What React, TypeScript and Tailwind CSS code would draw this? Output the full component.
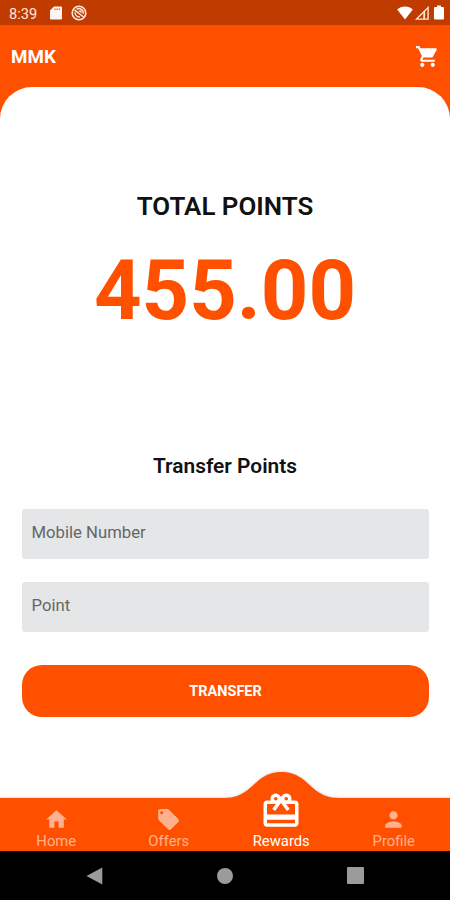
import React from "react";
import { MdHome, MdLocalOffer, MdPerson, MdRedeem, MdShoppingCart } from "react-icons/md";

function StatusBar() {
  return (
    <div className="flex h-[25px] shrink-0 items-center justify-between bg-[#bf3b00] pr-[6px] pl-[9px] text-white">
      <div className="flex items-center pt-[1px]">
        <span className="w-[41px] pt-[1px] text-[14.6px] leading-[24px] text-[#ffe9df]">8:39</span>
        <svg className="h-[14px] w-[12px]" viewBox="0 0 12 14" fill="#fff4ef">
          <path fillRule="evenodd" d="M4 0.5H11a1 1 0 0 1 1 1v11a1 1 0 0 1-1 1H1a1 1 0 0 1-1-1V4.5zM4.4 2.4v1.6h1V2.4zM6.6 2.4v1.6h1V2.4zM8.8 2.4v1.6h1V2.4z" />
        </svg>
        <svg className="ml-[9px] size-[16px]" viewBox="0 0 16 16" fill="none" stroke="#ffe9df">
          <circle cx="8" cy="8" r="6.8" strokeWidth="1.6" />
          <path d="M3.4 4.8l9.2 7.2" strokeWidth="1.5" />
          <path d="M5.6 4.4a4.2 4.2 0 0 1 6.5 4.4M4.1 7.2a4.2 4.2 0 0 0 5 4.7" strokeWidth="1.4" />
          <path d="M7.6 6.2h2.4v1.6" strokeWidth="1.3" />
        </svg>
      </div>
      <div className="flex items-center">
        <svg className="h-[14px] w-[16px]" viewBox="0 0 16 14" fill="#fff">
          <path d="M8 13.6L0.2 3.5C2.3 1.6 5 .6 8 .6s5.7 1 7.8 2.9z" />
        </svg>
        <svg className="ml-[2px] h-[14px] w-[14px]" viewBox="0 0 14 14" fill="none" stroke="#ffe2d5">
          <path d="M1.6 13.1L13.1 1.6V13.1z" strokeWidth="1.4" />
          <path d="M9.2 5v8" strokeWidth="1.8" />
        </svg>
        <svg className="ml-[5px] h-[15px] w-[10px]" viewBox="0 0 10 15" fill="#fff">
          <path d="M3 0.5h4V2h2a1 1 0 0 1 1 1v10.5a1 1 0 0 1-1 1H1a1 1 0 0 1-1-1V3a1 1 0 0 1 1-1h2z" />
        </svg>
      </div>
    </div>
  );
}

function Field({ label }: { label: string }) {
  return (
    <input
      aria-label={label}
      placeholder={label}
      className="block h-[50px] w-full rounded-[3px] bg-[#e4e6e7] pr-[10px] pb-[3px] pl-[10px] text-[16.7px] text-[#666] outline-none placeholder:text-[#666] placeholder:opacity-100"
    />
  );
}

function NavItem({ label, icon, active }: { label: string; icon: React.ReactNode; active?: boolean }) {
  return (
    <div className={`flex flex-1 flex-col items-center justify-end ${active ? "text-white" : "text-[#ffb08e]"}`}>
      {icon}
      <span className="text-[14.8px] leading-[20px]">{label}</span>
    </div>
  );
}

function BottomNav() {
  return (
    <nav className="relative h-[53px] shrink-0">
      <svg
        className="absolute -top-[27px] left-0 h-[80px] w-[450px] drop-shadow-[0_-1px_1px_rgba(0,0,0,0.12)]"
        viewBox="0 0 450 80"
        fill="#ff5000"
      >
        <path d="M0 27H224C234 27 242 24 250 17L259 9C266 3.500 273 1 281.5 1S297 3.500 304 9L313 17C321 24 329 27 339 27H450V80H0z" />
      </svg>
      <div className="relative flex h-full">
        <NavItem label="Home" icon={<MdHome className="-mb-[1px] size-[25px]" />} />
        <NavItem label="Offers" icon={<MdLocalOffer className="-mb-[1px] size-[25px]" />} />
        <NavItem label="Rewards" active icon={<MdRedeem className="-mb-[1px] size-[42px] shrink-0" />} />
        <NavItem label="Profile" icon={<MdPerson className="-mb-[1px] size-[25px]" />} />
      </div>
    </nav>
  );
}

export default function App() {
  return (
    <div className="flex h-[900px] w-[450px] flex-col overflow-hidden bg-[#ff5000] font-[Roboto,sans-serif]">
      <StatusBar />
      <header className="flex h-[62px] shrink-0 items-center justify-between pr-[10px] pl-[11px] text-white">
        <h1 className="pt-[2px] text-[18.8px] leading-6 font-bold">MMK</h1>
        <MdShoppingCart className="size-[25px]" />
      </header>
      <main className="flex min-h-0 flex-1 flex-col rounded-t-[32px] bg-white px-[21.5px]">
        <h2 className="mt-[103px] text-center text-[25.9px] leading-[32px] font-semibold text-[#111]">TOTAL POINTS</h2>
        <p className="mt-[21px] text-center text-[83px] leading-[96px] font-bold text-[#ff5000]">455.00</p>
        <h3 className="mt-[115px] text-center text-[20.9px] leading-[24px] font-semibold text-[#111]">Transfer Points</h3>
        <form className="mt-[30.5px] flex flex-col">
          <Field label="Mobile Number" />
          <div className="mt-[23px]">
            <Field label="Point" />
          </div>
          <button type="button" className="mt-[33.5px] h-[51.5px] w-full rounded-[20px] bg-[#ff5000] pt-[2px] pl-[1px] text-[14.5px] font-bold text-white">
            TRANSFER
          </button>
        </form>
      </main>
      <BottomNav />
      <div className="flex h-[49px] shrink-0 items-center bg-black pl-[86px]">
        <svg className="h-[18px] w-[17px]" viewBox="0 0 17 18" fill="#9b9b9b">
          <path d="M16.3.6v16.8L0.5 9z" />
        </svg>
        <div className="ml-[114px] size-[16px] rounded-full bg-[#9b9b9b]" />
        <div className="ml-[114px] size-[17px] rounded-[1px] bg-[#9b9b9b]" />
      </div>
    </div>
  );
}
